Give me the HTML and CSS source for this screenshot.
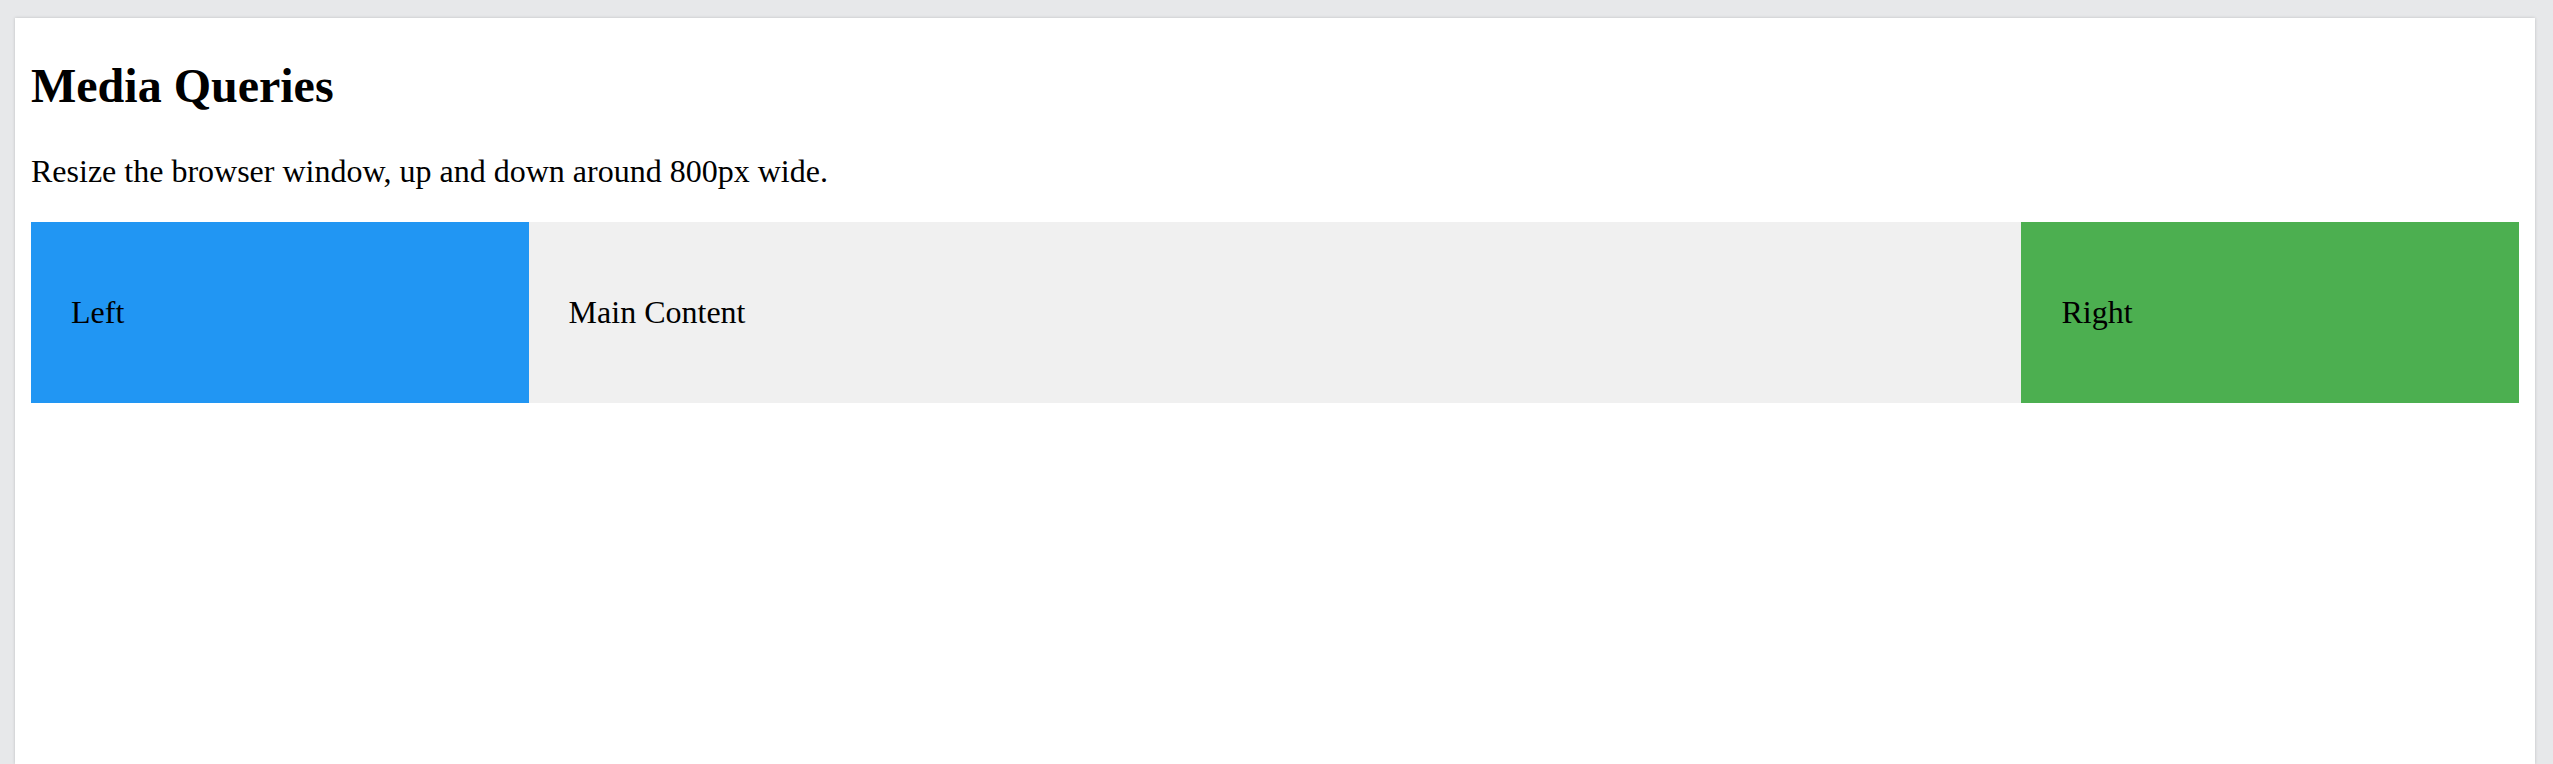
FILE: index.html
```html
<!DOCTYPE html>
<html lang="en">
<head>
	<meta charset="UTF-8">
	<title>Media Queries</title>
	<link rel="stylesheet" href="styles.css">
</head>
<body>
	<div class="frame">
		<h2>Media Queries</h2>
		<p>Resize the browser window, up and down around 800px wide.</p>
		<div class="row">
			<div class="left">
				<p>Left</p>
			</div>
			<div class="main">
				<p>Main Content</p>
			</div>
			<div class="right">
				<p>Right</p>
			</div>
		</div>
	</div>
</body>
</html>
```

FILE: styles.css
```css
*{
	box-sizing: border-box;
}
html{
	background: #e7e8ea;
}
body{
	margin: 0;
	padding: 18px 18px 0 15px;
	font-family: "Liberation Serif", "Times New Roman", serif;
	font-size: 32px;
	color: #000;
}
.frame{
	display: flow-root;
	background: #fff;
	min-height: 746px;
	padding: 0 16px;
	box-shadow: 0 0 3px rgba(0, 0, 0, 0.18);
}
h2{
	font-size: 48px;
	margin: 0.83em 0;
}
p{
	margin: 32px 0;
}
.row{
	display: flex;
}
.left{
	background-color: #2196F3;
	padding: 40px;
	width: 20%;
}
.main{
	background-color: #f0f0f0;
	padding: 40px;
	width: 60%;
}
.right{
	background-color: #4CAF50;
	padding: 40px;
	width: 20%;
}
```
